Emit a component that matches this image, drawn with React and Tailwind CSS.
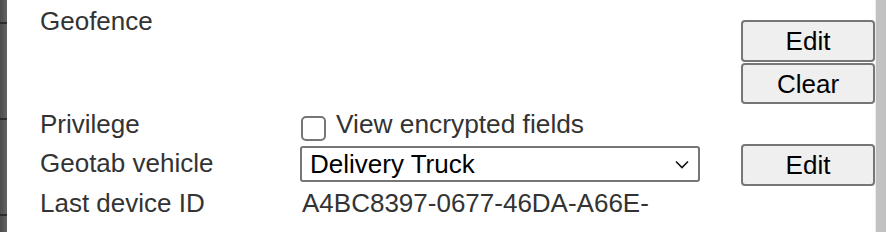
import React from "react";

const font = { fontFamily: '"Liberation Sans", Arial, sans-serif' };

const Button = ({ children, className = "" }) => (
  <button
    className={`w-[134px] bg-[#efefef] border-2 border-[#767676] rounded-[4px] text-black text-[26px] leading-none ${className}`}
  >
    {children}
  </button>
);

const Segment = ({ h }) => (
  <div className={`w-full bg-gradient-to-r from-[#4b4b4b] to-[#646464] ${h}`} />
);

const App = () => {
  return (
    <div className="flex w-[886px] h-[232px] bg-white overflow-hidden" style={font}>
      {/* left rail */}
      <div className="w-[7px] flex flex-col">
        <Segment h="h-[22px]" />
        <div className="h-[2px] bg-[#2c2c2c]" />
        <Segment h="h-[94px]" />
        <div className="h-[2px] bg-[#2c2c2c]" />
        <Segment h="h-[94px]" />
        <div className="h-[2px] bg-[#2c2c2c]" />
        <Segment h="flex-1" />
      </div>

      <div className="flex-1 pl-[33px] text-[26px] leading-[30px] text-[#333333]">
        {/* Geofence */}
        <div className="grid grid-cols-[260px_441px_134px] h-[108px]">
          <div className="mt-[6px]">Geofence</div>
          <div />
          <div className="mt-[20px] flex flex-col gap-[1px]">
            <Button className="h-[42px]">Edit</Button>
            <Button className="h-[41px]">Clear</Button>
          </div>
        </div>

        {/* Privilege */}
        <div className="grid grid-cols-[260px_441px_134px] h-[36px]">
          <div className="mt-[1px]">Privilege</div>
          <div className="flex items-start">
            <span className="mt-[8px] ml-[1px] w-[25px] h-[25px] border-2 border-[#767676] rounded-[5px] bg-white" />
            <span className="ml-[10px] mt-[1px] text-[26.3px]">View encrypted fields</span>
          </div>
          <div />
        </div>

        {/* Geotab vehicle */}
        <div className="grid grid-cols-[260px_441px_134px] h-[43px]">
          <div className="mt-[4px]">Geotab vehicle</div>
          <div className="mt-[2px]">
            <div className="w-[400px] h-[36px] border-2 border-[#767676] rounded-[3px] bg-white flex items-center justify-between pl-[8px] pr-[9px] text-black">
              <span className="leading-none">Delivery Truck</span>
              <svg width="14" height="9" viewBox="0 0 14 9" fill="none">
                <path d="M1 1.5 L7 7.5 L13 1.5" stroke="#111" strokeWidth="1.6" />
              </svg>
            </div>
          </div>
          <Button className="h-[42px]">Edit</Button>
        </div>

        {/* Last device ID */}
        <div className="grid grid-cols-[260px_441px_134px]">
          <div className="mt-[1px]">Last device ID</div>
          <div className="mt-[1px] ml-[2px]">A4BC8397-0677-46DA-A66E-</div>
          <div />
        </div>
      </div>

      {/* right scroll strip */}
      <div className="w-[11px] border-l border-[#ececec] bg-[#c2c2c2]" />
    </div>
  );
};

export default App;
